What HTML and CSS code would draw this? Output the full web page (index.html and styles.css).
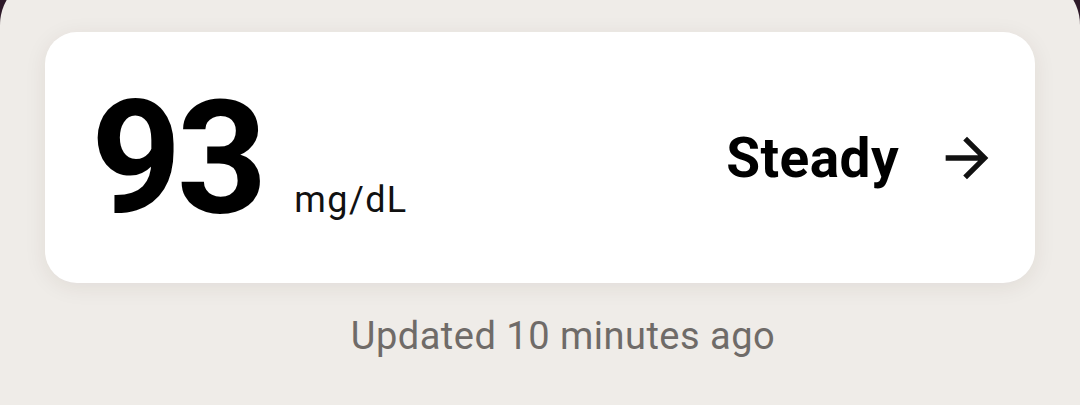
FILE: index.html
```html
<!DOCTYPE html>
<html lang="en">
<head>
  <meta charset="UTF-8">
  <meta name="viewport" content="width=device-width, initial-scale=1.0">
  <title>Glucose Reading</title>
  <link rel="stylesheet" href="styles.css">
</head>
<body>
  <div class="sheet">
    <div class="card">
      <div class="reading">
        <span class="value">93</span>
        <span class="unit">mg/dL</span>
      </div>
      <div class="trend">
        <span class="trend-label">Steady</span>
        <svg class="trend-icon" viewBox="0 0 24 24" width="64" height="64" aria-hidden="true">
          <path d="M12 4l-1.41 1.41L16.17 11H4v2h12.17l-5.58 5.59L12 20l8-8z"/>
        </svg>
      </div>
    </div>
    <p class="updated">Updated 10 minutes ago</p>
  </div>
</body>
</html>
```

FILE: styles.css
```css
body {
  margin: 0;
  background-color: #2e1a29;
  font-family: Roboto, "Liberation Sans", sans-serif;
  overflow: hidden;
}

.sheet {
  margin-top: -25px;
  height: 430px;
  box-sizing: border-box;
  padding: 57px 45px 0;
  border-radius: 50px 50px 0 0;
  background-color: #efece8;
}

.card {
  height: 251px;
  display: flex;
  align-items: center;
  justify-content: space-between;
  padding: 0 36px 0 46px;
  border-radius: 32px;
  background-color: #fff;
  box-shadow: 0 4px 22px rgba(60, 40, 30, 0.08);
}

.reading {
  display: flex;
  align-items: baseline;
  gap: 32px;
}

.value {
  font-size: 158px;
  font-weight: 700;
  line-height: 1;
  color: #000;
  letter-spacing: -5px;
}

.unit {
  font-size: 36px;
  letter-spacing: 1.4px;
  color: #111;
}

.trend {
  display: flex;
  align-items: center;
  gap: 36px;
}

.trend-label {
  font-size: 55px;
  font-weight: 700;
  letter-spacing: 0.4px;
  color: #000;
}

.trend-icon {
  fill: #111;
}

.updated {
  margin: 31px 0 0;
  padding-left: 46px;
  text-align: center;
  font-size: 38px;
  letter-spacing: 0.5px;
  color: #6f6b68;
}
```
